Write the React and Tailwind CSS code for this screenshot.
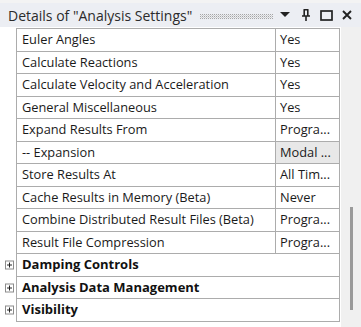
import React from 'react';

const rows = [
  { label: 'Euler Angles', value: 'Yes' },
  { label: 'Calculate Reactions', value: 'Yes' },
  { label: 'Calculate Velocity and Acceleration', value: 'Yes' },
  { label: 'General Miscellaneous', value: 'Yes' },
  { label: 'Expand Results From', value: 'Progra...' },
  { label: '-- Expansion', value: 'Modal ...', shaded: true },
  { label: 'Store Results At', value: 'All Tim...' },
  { label: 'Cache Results in Memory (Beta)', value: 'Never' },
  { label: 'Combine Distributed Result Files (Beta)', value: 'Progra...' },
  { label: 'Result File Compression', value: 'Progra...' },
  { label: 'Damping Controls', group: true },
  { label: 'Analysis Data Management', group: true },
  { label: 'Visibility', group: true },
];

function PlusBox() {
  return (
    <div className="absolute left-[-12px] top-1/2 -translate-y-1/2 w-[9px] h-[9px] border border-[#8c8c8c] bg-white flex items-center justify-center">
      <svg width="7" height="7" viewBox="0 0 7 7">
        <path d="M1 3.5h5M3.5 1v5" stroke="#222" strokeWidth="1" />
      </svg>
    </div>
  );
}

// dotted drag grip in the title bar
function Grip() {
  return (
    <svg className="shrink-0 ml-[5px] mt-[2px]" width="73" height="5" viewBox="0 0 73 5">
      <defs>
        <pattern id="grip" width="2" height="2" patternUnits="userSpaceOnUse">
          <rect x="0" y="0" width="1" height="1" fill="#a6a6a6" />
          <rect x="1" y="1" width="1" height="1" fill="#cfcfcf" />
        </pattern>
      </defs>
      <rect x="0" y="0" width="73" height="5" fill="url(#grip)" />
    </svg>
  );
}

function Row({ row, index }) {
  const h = index % 2 === 0 ? 'h-[23px]' : 'h-[22px]';
  if (row.group) {
    return (
      <div className={`relative flex items-center ${h} border-b border-[#acacac] pl-[5px] font-bold text-[13px] text-[#111]`}>
        <PlusBox />
        {row.label}
      </div>
    );
  }
  return (
    <div className={`flex ${h} border-b border-[#acacac]`}>
      <div className="w-[259px] shrink-0 flex items-center pl-[5px] border-r border-[#acacac] whitespace-nowrap overflow-hidden">
        {row.label}
      </div>
      <div className={`flex-1 flex items-center pl-[4px] whitespace-nowrap overflow-hidden ${row.shaded ? 'bg-[#e8e8e8]' : ''}`}>
        {row.value}
      </div>
    </div>
  );
}

export default function App() {
  return (
    <div className="w-[361px] h-[327px] bg-white overflow-hidden" style={{ fontFamily: '"Open Sans", "Noto Sans", sans-serif' }}>
      <div className="h-[3px] bg-[#f3f3f3]" />
      <div className="h-[24px] bg-[#eceef3] flex items-center pl-[8px]">
        <span className="w-[187px] shrink-0 text-[14px] text-[#2b2b2b] whitespace-nowrap">Details of "Analysis Settings"</span>
        <Grip />
        <svg className="shrink-0 ml-[7px]" width="10" height="6" viewBox="0 0 10 6"><path d="M0 0h10L5 5z" fill="#222" /></svg>
        <svg className="shrink-0 ml-[11px]" width="10" height="12" viewBox="0 0 10 12">
          <path d="M2.5 0.8h5M3.2 0.8v6M6.8 0.8v6M1 7h8M5 7v5" stroke="#222" strokeWidth="1.6" fill="none" />
        </svg>
        <svg className="shrink-0 ml-[9px]" width="13" height="11" viewBox="0 0 13 11">
          <rect x="1" y="1" width="11" height="9" stroke="#222" strokeWidth="1.7" fill="none" />
        </svg>
        <svg className="shrink-0 ml-[9px]" width="10" height="10" viewBox="0 0 10 10">
          <path d="M1 1l8 8M9 1l-8 8" stroke="#222" strokeWidth="1.9" />
        </svg>
      </div>
      <div className="flex h-[300px]">
        <div className="w-[341px] pt-[1px] pl-[16px] pr-[1px]">
          <div className="border-l border-r border-t border-[#acacac] text-[12.8px] text-[#1a1a1a]">
            {rows.map((r, i) => (
              <Row key={r.label} row={r} index={i} />
            ))}
          </div>
        </div>
        <div className="flex-1 bg-[#f0f0f0] pt-[180px] pl-[9px]">
          <div className="w-[3px] h-[103px] bg-[#9a9a9a]" />
        </div>
      </div>
    </div>
  );
}
